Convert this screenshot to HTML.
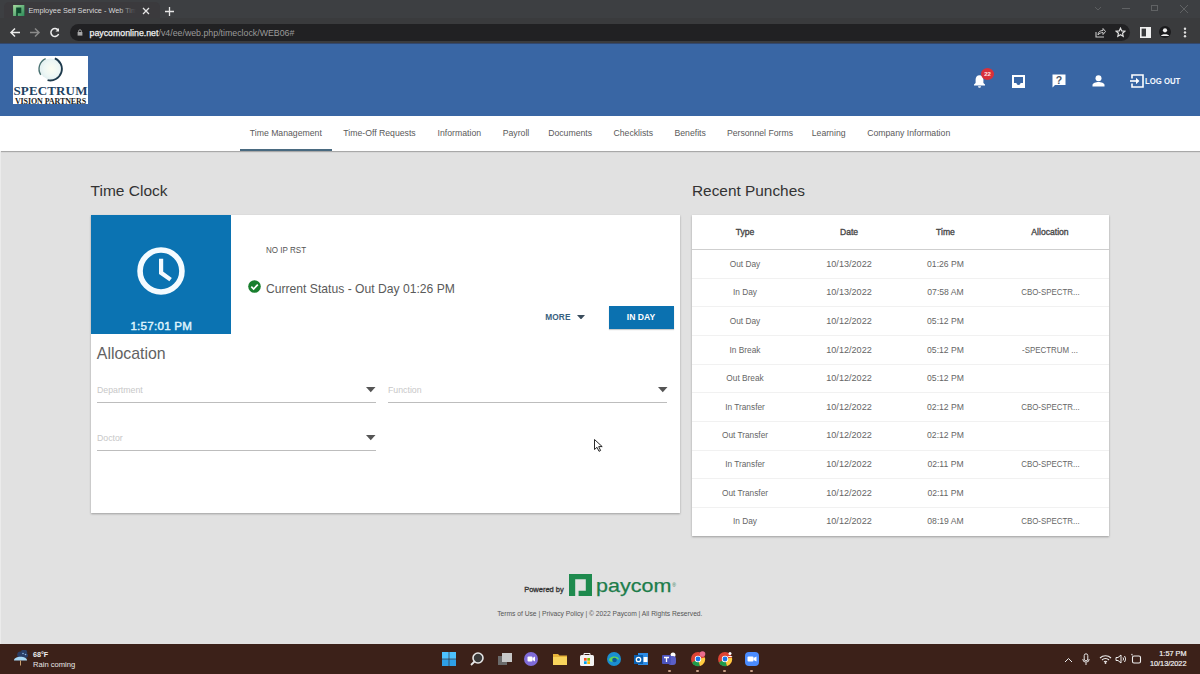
<!DOCTYPE html>
<html><head><meta charset="utf-8"><title>Time Clock</title>
<style>
html,body{margin:0;padding:0;width:1200px;height:674px;overflow:hidden;background:#e1e1e1;font-family:"Liberation Sans",sans-serif}
.t{position:absolute;white-space:nowrap;line-height:0;height:0}
.r{position:absolute;display:block}
</style></head><body>
<div class="r" style="left:0px;top:0px;width:1200px;height:18px;background:#3d3f42;"></div>
<div class="r" style="left:4px;top:2px;width:156px;height:17px;background:#3b3a3d;border-radius:5px 5px 0 0"></div>
<div class="r" style="left:0px;top:18px;width:1200px;height:25px;background:#3a3b3d;"></div>
<div class="r" style="left:70px;top:24px;width:1060px;height:17px;background:#212123;border-radius:9px"></div>
<svg class="r" style="left:13px;top:5px" width="11.5" height="11" viewBox="0 0 23 22.5"><defs><linearGradient id="fg" x1="0" y1="0" x2="1" y2="1"><stop offset="0" stop-color="#a8dca0"/><stop offset="1" stop-color="#2a8a58"/></linearGradient></defs><rect width="23" height="22.5" fill="#0e4a2c"/><path d="M0 0H23V22.5H9.6V16.8H16.8V5.3H6.2V22.5H0z" fill="url(#fg)"/></svg>
<div class="r" style="left:28px;top:4px;width:108px;height:14px;overflow:hidden"><div class="t" style="left:0.5px;top:6.97px;font-size:7.3px;color:#d8d8d8;font-weight:400;">Employee Self Service - Web Time Clock</div><div class="r" style="left:90px;top:0;width:18px;height:14px;background:linear-gradient(90deg,rgba(59,58,61,0),#3b3a3d)"></div></div>
<svg class="r" style="left:141px;top:6px" width="10" height="10" viewBox="0 0 10 10"><path d="M2 2L8 8M8 2L2 8" stroke="#e6e6e6" stroke-width="1.3"/></svg>
<svg class="r" style="left:164px;top:6px" width="11" height="11" viewBox="0 0 11 11"><path d="M5.5 1V10M1 5.5H10" stroke="#e6e6e6" stroke-width="1.3"/></svg>
<svg class="r" style="left:1093px;top:4px" width="10" height="10" viewBox="0 0 10 10"><path d="M2 3L5 6L8 3" stroke="#5c5e60" stroke-width="1" fill="none"/></svg>
<div class="r" style="left:1122px;top:8px;width:8px;height:1px;background:#606264;"></div>
<div class="r" style="left:1151px;top:5px;width:7px;height:6px;background:transparent;border:1px solid #606264;box-sizing:border-box"></div>
<svg class="r" style="left:1179px;top:4px" width="10" height="10" viewBox="0 0 10 10"><path d="M1 1L9 9M9 1L1 9" stroke="#606264" stroke-width="1"/></svg>
<svg class="r" style="left:9px;top:27px" width="12" height="11" viewBox="0 0 12 11"><path d="M11 5.5H2M6 1.5L2 5.5L6 9.5" stroke="#ededed" stroke-width="1.5" fill="none"/></svg>
<svg class="r" style="left:29px;top:27px" width="12" height="11" viewBox="0 0 12 11"><path d="M1 5.5H10M6 1.5L10 5.5L6 9.5" stroke="#8a8a8a" stroke-width="1.5" fill="none"/></svg>
<svg class="r" style="left:49px;top:27px" width="12" height="11" viewBox="0 0 12 11"><path d="M9.2 3.2A4 4 0 1 0 9.6 7" stroke="#ededed" stroke-width="1.5" fill="none"/><path d="M10 1V4.5H6.5z" fill="#ededed"/></svg>
<svg class="r" style="left:77px;top:28.5px" width="6" height="7" viewBox="0 0 6 7"><path d="M1.6 3V2.2a1.4 1.4 0 0 1 2.8 0V3" stroke="#a8a8a8" stroke-width="0.9" fill="none"/><rect x="0.6" y="3" width="4.8" height="3.6" fill="#a8a8a8"/></svg>
<div class="t" style="left:89.5px;top:33.05px;font-size:8.8px;color:#9a9a9a;font-weight:400;"><span style="color:#f1f1f1;-webkit-text-stroke:0.25px #f1f1f1">paycomonline.net</span>/v4/ee/web.php/timeclock/WEB06#</div>
<svg class="r" style="left:1095px;top:27px" width="11" height="11" viewBox="0 0 11 11"><path d="M1 5V10H9" stroke="#c8c8c8" stroke-width="1.1" fill="none"/><path d="M3 8C3 5 5 3.5 8 3.5V1.5L10.5 4.5L8 7.5V5.5C6 5.5 4 6.5 3 8z" fill="none" stroke="#c8c8c8" stroke-width="1"/></svg>
<svg class="r" style="left:1115px;top:27px" width="11" height="11" viewBox="0 0 24 24"><path d="M12 2.5L14.8 8.6L21.5 9.3L16.5 13.8L17.9 20.4L12 17L6.1 20.4L7.5 13.8L2.5 9.3L9.2 8.6z" fill="none" stroke="#e0e0e0" stroke-width="2.6"/></svg>
<svg class="r" style="left:1140px;top:27px" width="11" height="11" viewBox="0 0 11 11"><rect x="0.8" y="0.8" width="9.4" height="9.4" fill="none" stroke="#f0f0f0" stroke-width="1.6"/><rect x="6" y="1" width="4" height="9" fill="#f0f0f0"/></svg>
<svg class="r" style="left:1159px;top:26px" width="12" height="12" viewBox="0 0 12 12"><circle cx="6" cy="6" r="6" fill="#1b1b1d"/><circle cx="6" cy="4.3" r="2.1" fill="#f0f0f0"/><path d="M2 10C2 7.5 10 7.5 10 10z" fill="#f0f0f0"/></svg>
<svg class="r" style="left:1183px;top:27px" width="4" height="11" viewBox="0 0 4 11"><circle cx="2" cy="1.7" r="1.2" fill="#e0e0e0"/><circle cx="2" cy="5.5" r="1.2" fill="#e0e0e0"/><circle cx="2" cy="9.3" r="1.2" fill="#e0e0e0"/></svg>
<div class="r" style="left:0px;top:43px;width:1200px;height:601px;background:#e1e1e1;"></div>
<div class="r" style="left:0px;top:43px;width:1200px;height:73px;background:#3966a4;"></div>
<div class="r" style="left:0px;top:43px;width:1200px;height:1px;background:#33486e;"></div>
<div class="r" style="left:13px;top:56px;width:75px;height:48px;background:#fff;overflow:hidden">
<svg class="r" style="left:24px;top:0px" width="27" height="26" viewBox="0 0 27 26"><defs><radialGradient id="sg" cx="0.55" cy="0.5" r="0.5"><stop offset="0" stop-color="#fbfdf2"/><stop offset="0.7" stop-color="#eef7f5"/><stop offset="1" stop-color="#e4f1f1"/></radialGradient></defs><circle cx="13.35" cy="12.9" r="10.5" fill="url(#sg)"/><path d="M17.84 2.31A11.5 11.5 0 0 1 10.57 24.06" stroke="#1d3a4c" stroke-width="1.9" fill="none"/><path d="M3.77 18.89A11.3 11.3 0 0 1 8.66 2.62" stroke="#4a7272" stroke-width="1.4" fill="none"/></svg>
<div class="t" style="left:0px;top:34.9px;width:75px;text-align:center;font-family:'Liberation Serif',serif;font-size:13px;color:#1e4262;font-weight:700;letter-spacing:0.15px;transform:scaleY(1.0);transform-origin:0 4.5px">SPECTRUM</div>
<div class="t" style="left:-1px;top:45.5px;width:77px;text-align:center;font-family:'Liberation Serif',serif;font-size:8px;color:#1a1a1a;font-weight:700;letter-spacing:-0.1px">VISION PARTNERS</div>
</div>
<svg class="r" style="left:973px;top:74px" width="13" height="14" viewBox="0 0 13 14"><path d="M6.5 1.2C4 1.2 2.6 3.2 2.6 5.6V9L1 10.6V11.4H12V10.6L10.4 9V5.6C10.4 3.2 9 1.2 6.5 1.2z" fill="#fff"/><path d="M5 12.2h3a1.5 1.5 0 0 1-3 0z" fill="#fff"/></svg>
<div class="r" style="left:981px;top:67.5px;width:13px;height:12px;border-radius:50%;background:#d9303a"></div>
<div class="t" style="left:987.5px;top:73.52px;font-size:6px;color:#ffe8e8;font-weight:700;transform:translateX(-50%);">22</div>
<svg class="r" style="left:1012px;top:74.5px" width="13" height="13" viewBox="0 0 13 13"><path d="M0 0H13V13H0z M2 2V8H4.5C4.5 9.2 5.3 10 6.5 10S8.5 9.2 8.5 8H11V2z" fill="#fff" fill-rule="evenodd"/></svg>
<svg class="r" style="left:1051.5px;top:74px" width="14" height="14" viewBox="0 0 14 14"><path d="M0.5 0.5H13.5V11H3L0.5 13.5z" fill="#fff"/><text x="7" y="9.8" text-anchor="middle" font-family="Liberation Sans" font-weight="700" font-size="10.5" fill="#4a5568">?</text></svg>
<svg class="r" style="left:1092px;top:75px" width="13" height="12" viewBox="0 0 13 12"><circle cx="6.5" cy="3.2" r="3" fill="#fff"/><path d="M0.5 11.5V10C0.5 8 4 7 6.5 7S12.5 8 12.5 10V11.5z" fill="#fff"/></svg>
<svg class="r" style="left:1130px;top:73.5px" width="14" height="14" viewBox="0 0 14 14"><path d="M2 4.5V1H13V13H2V9.5" stroke="#fff" stroke-width="1.6" fill="none"/><path d="M0 7H8" stroke="#fff" stroke-width="1.6"/><path d="M6 3.8L9.4 7L6 10.2z" fill="#fff"/></svg>
<div class="t" style="left:1144.8px;top:81.48px;font-size:9px;color:#f4f8ff;font-weight:700;transform:scaleX(0.86);transform-origin:0 0">LOG OUT</div>
<div class="r" style="left:0px;top:116px;width:1200px;height:35px;background:#fff;box-shadow:0 1px 1px rgba(0,0,0,0.25)"></div>
<div class="t" style="left:285.8px;top:132.79px;font-size:8.7px;color:#5a5a5a;font-weight:400;transform:translateX(-50%);">Time Management</div>
<div class="t" style="left:379.5px;top:132.79px;font-size:8.7px;color:#5a5a5a;font-weight:400;transform:translateX(-50%);">Time-Off Requests</div>
<div class="t" style="left:459.35px;top:132.79px;font-size:8.7px;color:#5a5a5a;font-weight:400;transform:translateX(-50%);">Information</div>
<div class="t" style="left:516.0px;top:132.79px;font-size:8.7px;color:#5a5a5a;font-weight:400;transform:translateX(-50%);">Payroll</div>
<div class="t" style="left:570.15px;top:132.79px;font-size:8.7px;color:#5a5a5a;font-weight:400;transform:translateX(-50%);">Documents</div>
<div class="t" style="left:633.3px;top:132.79px;font-size:8.7px;color:#5a5a5a;font-weight:400;transform:translateX(-50%);">Checklists</div>
<div class="t" style="left:690.15px;top:132.79px;font-size:8.7px;color:#5a5a5a;font-weight:400;transform:translateX(-50%);">Benefits</div>
<div class="t" style="left:760.0px;top:132.79px;font-size:8.7px;color:#5a5a5a;font-weight:400;transform:translateX(-50%);">Personnel Forms</div>
<div class="t" style="left:828.65px;top:132.79px;font-size:8.7px;color:#5a5a5a;font-weight:400;transform:translateX(-50%);">Learning</div>
<div class="t" style="left:908.7px;top:132.79px;font-size:8.7px;color:#5a5a5a;font-weight:400;transform:translateX(-50%);">Company Information</div>
<div class="r" style="left:240px;top:149px;width:92px;height:2px;background:#4a6a80;"></div>
<div class="t" style="left:90.6px;top:191.13px;font-size:15.5px;color:#333;font-weight:400;">Time Clock</div>
<div class="t" style="left:692px;top:190.96px;font-size:15.4px;color:#333;font-weight:400;">Recent Punches</div>
<div class="r" style="left:91px;top:215px;width:589px;height:298px;background:#fff;box-shadow:0 1px 2px rgba(0,0,0,0.3)"></div>
<div class="r" style="left:91px;top:215px;width:140px;height:119px;background:#0b73b2;"></div>
<svg class="r" style="left:136px;top:245.5px" width="50" height="50" viewBox="0 0 50 50"><circle cx="25" cy="25" r="20.95" stroke="#f4fbff" stroke-width="5.6" fill="none"/><path d="M25.1 12.8V26.8L34.6 33.6" stroke="#f4fbff" stroke-width="4.2" fill="none" stroke-linejoin="miter"/></svg>
<div class="t" style="left:161.3px;top:325.58px;font-size:11.6px;color:#dff3fd;font-weight:400;transform:translateX(-50%);-webkit-text-stroke:0.45px #dff3fd;letter-spacing:0.25px">1:57:01 PM</div>
<div class="t" style="left:266.3px;top:249.99px;font-size:8.7px;color:#555;font-weight:400;transform:scaleX(0.925);transform-origin:0 0">NO IP RST</div>
<svg class="r" style="left:247.5px;top:279.5px" width="13" height="13" viewBox="0 0 13 13"><circle cx="6.5" cy="6.5" r="6.3" fill="#197f2e"/><path d="M3.3 6.7L5.6 9L9.8 4.6" stroke="#fff" stroke-width="1.7" fill="none"/></svg>
<div class="t" style="left:266px;top:288.89px;font-size:12.15px;color:#5a5a5a;font-weight:400;">Current Status - Out Day 01:26 PM</div>
<div class="t" style="left:545.3px;top:316.72px;font-size:8.3px;color:#38607e;font-weight:700;letter-spacing:0.1px">MORE</div>
<svg class="r" style="left:577px;top:314.5px" width="8" height="4.5" viewBox="0 0 8 4.5"><path d="M0 0H8L4 4.5z" fill="#3a4c5c"/></svg>
<div class="r" style="left:608.5px;top:306px;width:65px;height:23px;background:#0b71b0;box-shadow:0 1px 1px rgba(0,0,0,0.2)"></div>
<div class="t" style="left:641px;top:317.42px;font-size:8.6px;color:#fff;font-weight:700;transform:translateX(-50%);">IN DAY</div>
<div class="t" style="left:96.8px;top:353.79px;font-size:15.9px;color:#626262;font-weight:400;">Allocation</div>
<div class="t" style="left:97px;top:390.17px;font-size:8.75px;color:#c8c8c8;font-weight:400;">Department</div><div class="r" style="left:97px;top:402px;width:278.5px;height:1px;background:#bdbdbd;"></div><svg class="r" style="left:366.0px;top:386.7px" width="10" height="6" viewBox="0 0 10 6"><path d="M0 0H9.5L4.75 5.3z" fill="#555"/></svg>
<div class="t" style="left:388px;top:390.17px;font-size:8.75px;color:#c8c8c8;font-weight:400;">Function</div><div class="r" style="left:388px;top:402px;width:279px;height:1px;background:#bdbdbd;"></div><svg class="r" style="left:657.5px;top:386.7px" width="10" height="6" viewBox="0 0 10 6"><path d="M0 0H9.5L4.75 5.3z" fill="#555"/></svg>
<div class="t" style="left:97px;top:438.17px;font-size:8.75px;color:#c8c8c8;font-weight:400;">Doctor</div><div class="r" style="left:97px;top:450px;width:278.5px;height:1px;background:#bdbdbd;"></div><svg class="r" style="left:366.0px;top:434.7px" width="10" height="6" viewBox="0 0 10 6"><path d="M0 0H9.5L4.75 5.3z" fill="#555"/></svg>
<svg class="r" style="left:594px;top:439px" width="10" height="13" viewBox="0 0 10 13"><path d="M0.5 0.5V10.5L3 8.3L5 12.3L6.6 11.5L4.7 7.6H8.2z" fill="#fff" stroke="#111" stroke-width="0.9"/></svg>
<div class="r" style="left:692px;top:215px;width:417px;height:321px;background:#fff;box-shadow:0 1px 2px rgba(0,0,0,0.3)"></div>
<div class="t" style="left:745px;top:231.92px;font-size:8.6px;color:#4a4a4a;font-weight:400;transform:translateX(-50%);-webkit-text-stroke:0.35px #4a4a4a">Type</div>
<div class="t" style="left:849px;top:231.92px;font-size:8.6px;color:#4a4a4a;font-weight:400;transform:translateX(-50%);-webkit-text-stroke:0.35px #4a4a4a">Date</div>
<div class="t" style="left:945.5px;top:231.92px;font-size:8.6px;color:#4a4a4a;font-weight:400;transform:translateX(-50%);-webkit-text-stroke:0.35px #4a4a4a">Time</div>
<div class="t" style="left:1050px;top:231.92px;font-size:8.6px;color:#4a4a4a;font-weight:400;transform:translateX(-50%);-webkit-text-stroke:0.35px #4a4a4a">Allocation</div>
<div class="r" style="left:692px;top:249px;width:417px;height:1px;background:#cfcfcf;"></div>
<div class="r" style="left:0;top:253.55px;width:1200px;height:20px;display:flex;align-items:baseline;color:#666;white-space:nowrap"><div style="margin-left:700px;width:90px;flex:none;text-align:center;font-size:8.3px;line-height:20px">Out Day</div><div style="margin-left:14px;width:90px;flex:none;text-align:center;font-size:9.1px;line-height:20px">10/13/2022</div><div style="margin-left:6.5px;width:90px;flex:none;text-align:center;font-size:8.6px;line-height:20px">01:26 PM</div><div style="margin-left:14.5px;width:90px;flex:none;text-align:center;font-size:8.5px;line-height:20px">&nbsp;</div></div>
<div class="r" style="left:692px;top:278px;width:417px;height:1px;background:#f1f1f1;"></div>
<div class="r" style="left:0;top:282.20px;width:1200px;height:20px;display:flex;align-items:baseline;color:#666;white-space:nowrap"><div style="margin-left:700px;width:90px;flex:none;text-align:center;font-size:8.3px;line-height:20px">In Day</div><div style="margin-left:14px;width:90px;flex:none;text-align:center;font-size:9.1px;line-height:20px">10/13/2022</div><div style="margin-left:6.5px;width:90px;flex:none;text-align:center;font-size:8.6px;line-height:20px">07:58 AM</div><div style="margin-left:14.5px;width:90px;flex:none;text-align:center;font-size:8.5px;line-height:20px"><span style="display:inline-block;transform:scaleX(0.93)">CBO-SPECTR...</span></div></div>
<div class="r" style="left:692px;top:306px;width:417px;height:1px;background:#f1f1f1;"></div>
<div class="r" style="left:0;top:310.85px;width:1200px;height:20px;display:flex;align-items:baseline;color:#666;white-space:nowrap"><div style="margin-left:700px;width:90px;flex:none;text-align:center;font-size:8.3px;line-height:20px">Out Day</div><div style="margin-left:14px;width:90px;flex:none;text-align:center;font-size:9.1px;line-height:20px">10/12/2022</div><div style="margin-left:6.5px;width:90px;flex:none;text-align:center;font-size:8.6px;line-height:20px">05:12 PM</div><div style="margin-left:14.5px;width:90px;flex:none;text-align:center;font-size:8.5px;line-height:20px">&nbsp;</div></div>
<div class="r" style="left:692px;top:335px;width:417px;height:1px;background:#f1f1f1;"></div>
<div class="r" style="left:0;top:339.50px;width:1200px;height:20px;display:flex;align-items:baseline;color:#666;white-space:nowrap"><div style="margin-left:700px;width:90px;flex:none;text-align:center;font-size:8.3px;line-height:20px">In Break</div><div style="margin-left:14px;width:90px;flex:none;text-align:center;font-size:9.1px;line-height:20px">10/12/2022</div><div style="margin-left:6.5px;width:90px;flex:none;text-align:center;font-size:8.6px;line-height:20px">05:12 PM</div><div style="margin-left:14.5px;width:90px;flex:none;text-align:center;font-size:8.5px;line-height:20px"><span style="display:inline-block;transform:scaleX(0.93)">-SPECTRUM ...</span></div></div>
<div class="r" style="left:692px;top:364px;width:417px;height:1px;background:#f1f1f1;"></div>
<div class="r" style="left:0;top:368.15px;width:1200px;height:20px;display:flex;align-items:baseline;color:#666;white-space:nowrap"><div style="margin-left:700px;width:90px;flex:none;text-align:center;font-size:8.3px;line-height:20px">Out Break</div><div style="margin-left:14px;width:90px;flex:none;text-align:center;font-size:9.1px;line-height:20px">10/12/2022</div><div style="margin-left:6.5px;width:90px;flex:none;text-align:center;font-size:8.6px;line-height:20px">05:12 PM</div><div style="margin-left:14.5px;width:90px;flex:none;text-align:center;font-size:8.5px;line-height:20px">&nbsp;</div></div>
<div class="r" style="left:692px;top:392px;width:417px;height:1px;background:#f1f1f1;"></div>
<div class="r" style="left:0;top:396.80px;width:1200px;height:20px;display:flex;align-items:baseline;color:#666;white-space:nowrap"><div style="margin-left:700px;width:90px;flex:none;text-align:center;font-size:8.3px;line-height:20px">In Transfer</div><div style="margin-left:14px;width:90px;flex:none;text-align:center;font-size:9.1px;line-height:20px">10/12/2022</div><div style="margin-left:6.5px;width:90px;flex:none;text-align:center;font-size:8.6px;line-height:20px">02:12 PM</div><div style="margin-left:14.5px;width:90px;flex:none;text-align:center;font-size:8.5px;line-height:20px"><span style="display:inline-block;transform:scaleX(0.93)">CBO-SPECTR...</span></div></div>
<div class="r" style="left:692px;top:421px;width:417px;height:1px;background:#f1f1f1;"></div>
<div class="r" style="left:0;top:425.45px;width:1200px;height:20px;display:flex;align-items:baseline;color:#666;white-space:nowrap"><div style="margin-left:700px;width:90px;flex:none;text-align:center;font-size:8.3px;line-height:20px">Out Transfer</div><div style="margin-left:14px;width:90px;flex:none;text-align:center;font-size:9.1px;line-height:20px">10/12/2022</div><div style="margin-left:6.5px;width:90px;flex:none;text-align:center;font-size:8.6px;line-height:20px">02:12 PM</div><div style="margin-left:14.5px;width:90px;flex:none;text-align:center;font-size:8.5px;line-height:20px">&nbsp;</div></div>
<div class="r" style="left:692px;top:450px;width:417px;height:1px;background:#f1f1f1;"></div>
<div class="r" style="left:0;top:454.10px;width:1200px;height:20px;display:flex;align-items:baseline;color:#666;white-space:nowrap"><div style="margin-left:700px;width:90px;flex:none;text-align:center;font-size:8.3px;line-height:20px">In Transfer</div><div style="margin-left:14px;width:90px;flex:none;text-align:center;font-size:9.1px;line-height:20px">10/12/2022</div><div style="margin-left:6.5px;width:90px;flex:none;text-align:center;font-size:8.6px;line-height:20px">02:11 PM</div><div style="margin-left:14.5px;width:90px;flex:none;text-align:center;font-size:8.5px;line-height:20px"><span style="display:inline-block;transform:scaleX(0.93)">CBO-SPECTR...</span></div></div>
<div class="r" style="left:692px;top:478px;width:417px;height:1px;background:#f1f1f1;"></div>
<div class="r" style="left:0;top:482.75px;width:1200px;height:20px;display:flex;align-items:baseline;color:#666;white-space:nowrap"><div style="margin-left:700px;width:90px;flex:none;text-align:center;font-size:8.3px;line-height:20px">Out Transfer</div><div style="margin-left:14px;width:90px;flex:none;text-align:center;font-size:9.1px;line-height:20px">10/12/2022</div><div style="margin-left:6.5px;width:90px;flex:none;text-align:center;font-size:8.6px;line-height:20px">02:11 PM</div><div style="margin-left:14.5px;width:90px;flex:none;text-align:center;font-size:8.5px;line-height:20px">&nbsp;</div></div>
<div class="r" style="left:692px;top:507px;width:417px;height:1px;background:#f1f1f1;"></div>
<div class="r" style="left:0;top:511.40px;width:1200px;height:20px;display:flex;align-items:baseline;color:#666;white-space:nowrap"><div style="margin-left:700px;width:90px;flex:none;text-align:center;font-size:8.3px;line-height:20px">In Day</div><div style="margin-left:14px;width:90px;flex:none;text-align:center;font-size:9.1px;line-height:20px">10/12/2022</div><div style="margin-left:6.5px;width:90px;flex:none;text-align:center;font-size:8.6px;line-height:20px">08:19 AM</div><div style="margin-left:14.5px;width:90px;flex:none;text-align:center;font-size:8.5px;line-height:20px"><span style="display:inline-block;transform:scaleX(0.93)">CBO-SPECTR...</span></div></div>
<div class="t" style="left:524.2px;top:590.00px;font-size:7.5px;color:#333;font-weight:400;-webkit-text-stroke:0.3px #333">Powered by</div>
<svg class="r" style="left:568.5px;top:573.5px" width="23" height="22.5" viewBox="0 0 23 22.5"><path d="M0 0H23V22.5H9.6V16.8H16.8V5.3H6.2V22.5H0z" fill="#1e8a4e"/></svg>
<div class="t" style="left:595.8px;top:586.12px;font-size:18.4px;color:#1d7d4b;font-weight:400;transform:scaleX(1.17);transform-origin:0 0;-webkit-text-stroke:0.25px #1d7d4b">paycom</div>
<div class="t" style="left:672.2px;top:584.77px;font-size:5px;color:#2d7d55;font-weight:400;">®</div>
<div class="t" style="left:599.8px;top:613.88px;font-size:6.7px;color:#555;font-weight:400;transform:translateX(-50%);">Terms of Use | Privacy Policy | © 2022 Paycom | All Rights Reserved.</div>
<div class="r" style="left:0px;top:644px;width:1200px;height:30px;background:#3c2119;"></div>
<div class="r" style="left:0px;top:151px;width:1px;height:493px;background:#ebebeb;"></div>
<svg class="r" style="left:12px;top:650px" width="18" height="18" viewBox="0 0 18 18"><path d="M9 1.5A3 3 0 0 1 15 3.5A2.5 2.5 0 0 1 14 8H8A2 2 0 0 1 9 1.5z" fill="#2a3e66"/><circle cx="11" cy="3.5" r="0.8" fill="#8fb4e0"/><circle cx="13.5" cy="4.5" r="0.8" fill="#8fb4e0"/><path d="M2 10.5C2 5.5 15 5.5 15 10.5z" fill="#a8d8f5"/><path d="M8.5 10.5V15.5" stroke="#c9a070" stroke-width="1"/></svg>
<div class="t" style="left:33px;top:654.51px;font-size:7.2px;color:#f0f0f0;font-weight:700;">68°F</div>
<div class="t" style="left:33px;top:664.87px;font-size:7.6px;color:#e8e8e8;font-weight:400;">Rain coming</div>
<svg class="r" style="left:441px;top:651px" width="16" height="16" viewBox="0 0 16 16"><rect x="1" y="1" width="6.7" height="6.7" fill="#4cc2ff"/><rect x="8.3" y="1" width="6.7" height="6.7" fill="#4cc2ff"/><rect x="1" y="8.3" width="6.7" height="6.7" fill="#2e9fe6"/><rect x="8.3" y="8.3" width="6.7" height="6.7" fill="#2e9fe6"/></svg>
<svg class="r" style="left:469px;top:651px" width="16" height="16" viewBox="0 0 16 16"><circle cx="9" cy="7" r="5" stroke="#e6e6e6" stroke-width="1.6" fill="#3a3a3a"/><path d="M5.5 10.5L2 14" stroke="#e6e6e6" stroke-width="1.8"/></svg>
<svg class="r" style="left:496.5px;top:651px" width="16" height="16" viewBox="0 0 16 16"><rect x="1" y="5" width="9" height="9" fill="#6a6a6a"/><rect x="5" y="2" width="10" height="9" fill="#c8c8c8"/></svg>
<svg class="r" style="left:523px;top:651px" width="16" height="16" viewBox="0 0 16 16"><circle cx="8" cy="8" r="7" fill="#7f6bd8"/><rect x="4.5" y="5.5" width="5" height="5" rx="1" fill="#fff"/><path d="M9.5 7L12 5.5V10.5L9.5 9z" fill="#fff"/></svg>
<svg class="r" style="left:551.8px;top:651px" width="16" height="16" viewBox="0 0 16 16"><path d="M1 3H6L7.5 4.5H15V14H1z" fill="#e8b33a"/><rect x="1" y="6" width="14" height="8" fill="#f8d45c"/></svg>
<svg class="r" style="left:578.5px;top:651px" width="16" height="16" viewBox="0 0 16 16"><rect x="1" y="4" width="14" height="11" rx="1.5" fill="#f2f2f2"/><path d="M5 4V2.5H11V4" stroke="#f2f2f2" fill="none"/><rect x="5" y="7" width="2.7" height="2.7" fill="#f25022"/><rect x="8.3" y="7" width="2.7" height="2.7" fill="#7fba00"/><rect x="5" y="10.3" width="2.7" height="2.7" fill="#00a4ef"/><rect x="8.3" y="10.3" width="2.7" height="2.7" fill="#ffb900"/></svg>
<svg class="r" style="left:605.8px;top:651px" width="16" height="16" viewBox="0 0 16 16"><circle cx="8" cy="8" r="7" fill="#1a8fd0"/><path d="M3 9C3 5 13 4 13 9C11 7 7 8 8 11C5 11 3 10 3 9z" fill="#5fd35a"/><circle cx="8.5" cy="9" r="2.3" fill="#0c5a9a"/></svg>
<svg class="r" style="left:633.3px;top:651px" width="16" height="16" viewBox="0 0 16 16"><rect x="5" y="2" width="10" height="12" fill="#2d8ce6"/><rect x="1" y="4" width="9" height="9" fill="#0a5fb0"/><circle cx="5.5" cy="8.5" r="2.2" stroke="#fff" stroke-width="1.3" fill="none"/><path d="M10.5 6H14.5V11H10.5z" fill="#fff"/></svg>
<svg class="r" style="left:661px;top:651px" width="16" height="16" viewBox="0 0 16 16"><circle cx="12" cy="4" r="2.5" fill="#fff"/><rect x="7" y="5" width="8" height="9" rx="3" fill="#5b5fc7"/><rect x="1" y="4" width="9" height="9" rx="1" fill="#4b53bc"/><path d="M3 6.5H8M5.5 6.5V11" stroke="#fff" stroke-width="1.3"/></svg>
<svg class="r" style="left:689.8px;top:651px" width="16" height="16" viewBox="0 0 16 16"><circle cx="8" cy="8" r="7" fill="#dd4434"/><path d="M8 8L2 11.5A7 7 0 0 0 10 14.9z" fill="#1e9a4a"/><path d="M8 8L14.9 6.5A7 7 0 0 1 10 14.9z" fill="#ffcd40"/><circle cx="8" cy="8" r="3.2" fill="#fff"/><circle cx="8" cy="8" r="2.4" fill="#1a73e8"/><circle cx="12.5" cy="3" r="2.8" fill="#ea6d8e"/></svg>
<svg class="r" style="left:716.8px;top:651px" width="16" height="16" viewBox="0 0 16 16"><circle cx="8" cy="8" r="7" fill="#dd4434"/><path d="M8 8L2 11.5A7 7 0 0 0 10 14.9z" fill="#1e9a4a"/><path d="M8 8L14.9 6.5A7 7 0 0 1 10 14.9z" fill="#ffcd40"/><circle cx="8" cy="8" r="3.2" fill="#fff"/><circle cx="8" cy="8" r="2.4" fill="#1a73e8"/><circle cx="13" cy="2.5" r="1.5" fill="#fff"/><path d="M10.5 6C10.5 4.5 15.5 4.5 15.5 6z" fill="#fff"/></svg>
<svg class="r" style="left:743.8px;top:651px" width="16" height="16" viewBox="0 0 16 16"><rect x="1" y="1" width="14" height="14" rx="4" fill="#4a8cff"/><rect x="3.5" y="5.5" width="6" height="5" rx="1" fill="#fff"/><path d="M9.5 7L12.5 5.5V10.5L9.5 9z" fill="#fff"/></svg>
<div class="r" style="left:667.5px;top:670px;width:3px;height:1.5px;background:#c8a088;border-radius:1px"></div>
<div class="r" style="left:696.3px;top:670px;width:3px;height:1.5px;background:#c8a088;border-radius:1px"></div>
<div class="r" style="left:723.3px;top:670px;width:3px;height:1.5px;background:#c8a088;border-radius:1px"></div>
<div class="r" style="left:750.3px;top:670px;width:3px;height:1.5px;background:#c8a088;border-radius:1px"></div>
<svg class="r" style="left:1064px;top:656.5px" width="9" height="6" viewBox="0 0 9 6"><path d="M1 5L4.5 1.5L8 5" stroke="#eee" stroke-width="1" fill="none"/></svg>
<svg class="r" style="left:1082px;top:653px" width="8" height="13" viewBox="0 0 8 13"><rect x="2.2" y="0.8" width="3.6" height="7" rx="1.8" stroke="#e6e6e6" fill="none"/><path d="M0.8 6A3.2 3.2 0 0 0 7.2 6M4 9.5V12" stroke="#e6e6e6" fill="none"/></svg>
<svg class="r" style="left:1099px;top:654px" width="13" height="10" viewBox="0 0 13 10"><path d="M1 4A8 8 0 0 1 12 4M3 6A5 5 0 0 1 10 6M5 8A2 2 0 0 1 8 8" stroke="#eee" stroke-width="1.1" fill="none"/><circle cx="6.5" cy="9" r="0.9" fill="#eee"/></svg>
<svg class="r" style="left:1115px;top:654px" width="11" height="10" viewBox="0 0 11 10"><path d="M1 3.5H3L6 1V9L3 6.5H1z" stroke="#eee" fill="none"/><path d="M8 3.5A2.5 2.5 0 0 1 8 6.5M9.5 2A4.5 4.5 0 0 1 9.5 8" stroke="#eee" fill="none"/></svg>
<svg class="r" style="left:1130px;top:653px" width="12" height="11" viewBox="0 0 12 11"><rect x="2.5" y="3" width="8" height="7" rx="1.5" stroke="#eee" stroke-width="1.1" fill="none"/><path d="M2 0.5L3 2.5L1 2z" fill="#eee"/></svg>
<div class="t" style="right:13.5px;top:654.47px;font-size:7.3px;color:#f0f0f0;font-weight:400;-webkit-text-stroke:0.2px #f0f0f0">1:57 PM</div>
<div class="t" style="right:13.5px;top:664.37px;font-size:7.3px;color:#f0f0f0;font-weight:400;-webkit-text-stroke:0.2px #f0f0f0">10/13/2022</div>
</body></html>
